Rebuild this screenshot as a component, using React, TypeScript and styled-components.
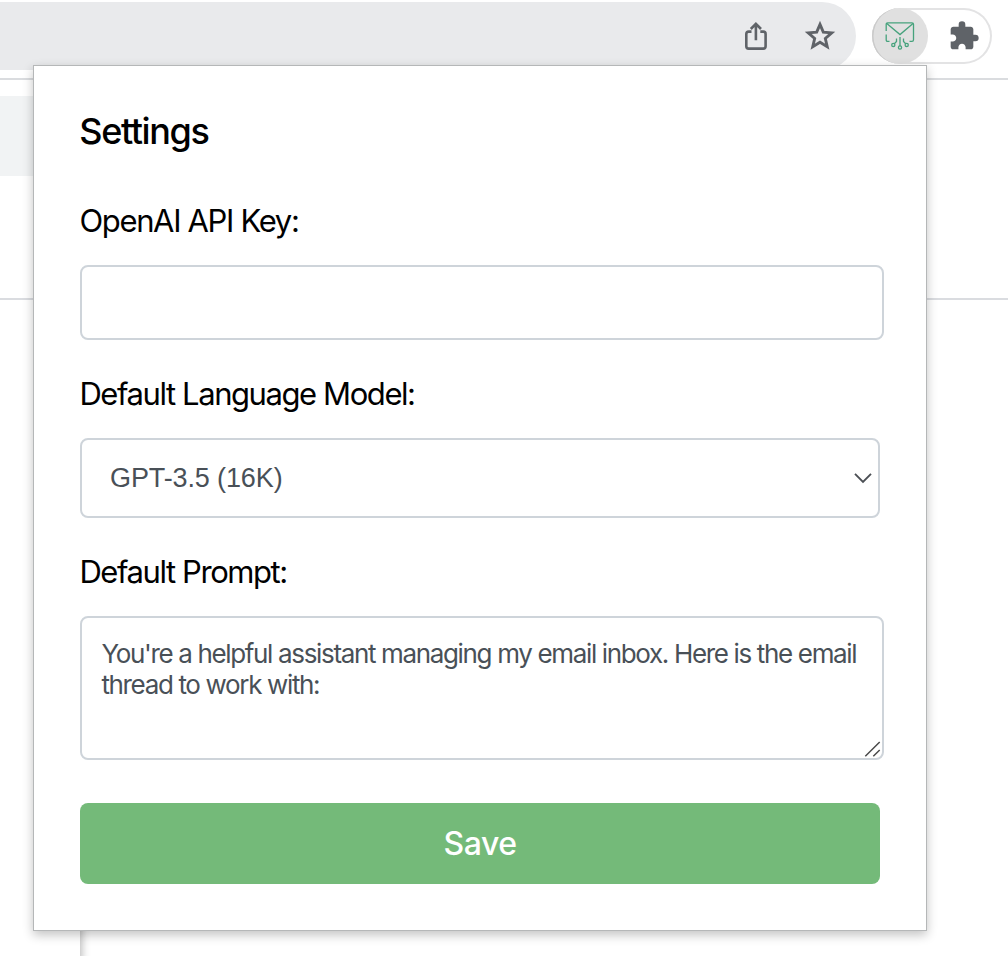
import React from 'react';
import styled, { createGlobalStyle } from 'styled-components';

const GlobalStyle = createGlobalStyle`
  *, *::before, *::after { box-sizing: border-box; }
  body { margin: 0; background: #fff; font-family: Inter, "Liberation Sans", sans-serif; }
`;

const Browser = styled.div`
  position: relative;
  width: 1008px;
  height: 956px;
  overflow: hidden;
  background: #fff;
  display: flex;
  flex-direction: column;
`;

const Toolbar = styled.header`
  display: flex;
  align-items: flex-start;
  gap: 16px;
  height: 80px;
  padding-top: 2px;
  border-bottom: 2px solid #dadcdf;
`;

const Omnibox = styled.div`
  display: flex;
  align-items: center;
  justify-content: flex-end;
  gap: 36px;
  width: 856px;
  height: 68px;
  padding-right: 20px;
  border-radius: 0 34px 34px 0;
  background: #e9eaec;
`;

const ExtensionPill = styled.div`
  display: flex;
  align-items: center;
  width: 120px;
  height: 56px;
  margin-top: 6px;
  border-radius: 28px;
  box-shadow: inset 0 0 0 2px #e3e3e4;
`;

const ActiveExtension = styled.div`
  display: flex;
  align-items: center;
  justify-content: center;
  width: 56px;
  height: 56px;
  margin-right: 20px;
  border-radius: 50%;
  background: #e0e0e0;
  box-shadow: inset 2px 0 0 -0.5px #cacaca;
`;

const PageStrip = styled.div`
  height: 220px;
  padding-top: 16px;
  border-bottom: 2px solid #dadce0;
`;

const SearchBlock = styled.div`
  width: 400px;
  height: 80px;
  background: #f1f3f4;
`;

const SideRail = styled.div`
  flex: 1;
  width: 80px;
  box-shadow: 1px 8px 9px rgba(0, 0, 0, 0.32);
  clip-path: inset(0 -20px 0 0);
`;

const Popup = styled.main`
  position: absolute;
  left: 33px;
  top: 65px;
  width: 894px;
  height: 866px;
  padding: 43px 42px 0 46px;
  border: 1px solid #b5b7b8;
  background: #fff;
  box-shadow: 0 4px 10px rgba(0, 0, 0, 0.24);
`;

const Title = styled.h1`
  margin: 0 0 48px -0.7px;
  font-size: 36px;
  line-height: 44px;
  font-weight: 500;
  letter-spacing: -1.4px;
  color: #000;
`;

const Field = styled.div`
  display: flex;
  flex-direction: column;
  margin-bottom: 34px;
`;

const Label = styled.label<{ $tracking: number }>`
  margin: 0 0 24px -0.6px;
  font-size: 31px;
  line-height: 40px;
  letter-spacing: ${(p) => p.$tracking}px;
  color: #000;
  white-space: nowrap;
`;

const KeyInput = styled.input`
  width: 804px;
  height: 75px;
  padding: 0 20px;
  border: 2px solid #ced4da;
  border-radius: 8px;
  font: 26px/31px Inter, sans-serif;
  color: #495057;
  background: #fff;
  outline: none;
`;

const SelectWrap = styled.div`
  position: relative;
  width: 800px;
  height: 80px;
`;

const Select = styled.select`
  appearance: none;
  width: 100%;
  height: 100%;
  padding: 0 28px;
  border: 2px solid #ced4da;
  border-radius: 8px;
  font: 27px/32px "Liberation Sans", sans-serif;
  letter-spacing: -0.12px;
  color: #495057;
  background: #fff;
  outline: none;
`;

const Chevron = styled.svg`
  position: absolute;
  right: 7px;
  top: 33px;
  pointer-events: none;
`;

const PromptWrap = styled.div`
  position: relative;
  width: 804px;
  height: 144px;
`;

const Prompt = styled.textarea`
  display: block;
  width: 100%;
  height: 100%;
  padding: 20px 16px 20px 19.4px;
  border: 2px solid #ced4da;
  border-radius: 8px;
  font: 26px/31px Inter, sans-serif;
  letter-spacing: -1.345px;
  color: #495057;
  background: #fff;
  resize: none;
  overflow: hidden;
  outline: none;
`;

const Grip = styled.svg`
  position: absolute;
  right: 2px;
  bottom: 2px;
  pointer-events: none;
`;

const SaveButton = styled.button`
  display: block;
  width: 800px;
  height: 81px;
  margin-top: 43px;
  padding: 0;
  border: 0;
  border-radius: 8px;
  background: #74ba79;
  color: #fff;
  font: 500 32px/40px Inter, sans-serif;
  letter-spacing: -0.5px;
`;

const PromptField = styled(Field)`
  margin-bottom: 0;
`;

const ShareIcon = () => (
  <svg width="24" height="30" viewBox="0 0 24 30" fill="none" stroke="#5f6368" strokeWidth="2.6" strokeLinejoin="round">
    <path d="M7.5 10.6H4.6Q2.3 10.6 2.3 12.9V25.3Q2.3 27.6 4.6 27.6H19.3Q21.6 27.6 21.6 25.3V12.9Q21.6 10.6 19.3 10.6H16.3" />
    <path d="M11.9 19.2V3M6.8 8L11.9 2.9L17 8" strokeLinejoin="miter" />
  </svg>
);

const StarIcon = () => (
  <svg width="32" height="32" viewBox="1 1.1 30 30" fill="none" stroke="#5f6368" strokeWidth="2.7">
    <path d="M16 5.2L19.1 12.5L27 13.2L21 18.4L22.8 26.1L16 22L9.2 26.1L11 18.4L5 13.2L12.9 12.5Z" />
  </svg>
);

const MailCircuitIcon = () => (
  <svg width="30" height="30" viewBox="0 0 30 30" fill="none" stroke="#46a27c" strokeWidth="1.3">
    <path d="M4.5 20.4H2.7Q1.2 20.4 1.2 18.8V13.5M1.2 10V3.3Q1.2 1.8 2.7 1.8H27Q28.5 1.8 28.5 3.3V18.8Q28.5 20.4 27 20.4H24.5" />
    <path d="M1.8 2.6L15 13.6L28 2.6" />
    <path d="M15 16V24.9M11.5 17.5V20.4L9.3 22.7M18.5 17.5V20.4L20.7 22.7" />
    <circle cx="8.3" cy="23.9" r="1.6" />
    <circle cx="15" cy="26.5" r="1.6" />
    <circle cx="21.7" cy="23.9" r="1.6" />
  </svg>
);

const PuzzleIcon = () => (
  <svg width="32" height="32" viewBox="0 0 24 24" fill="#5f6368">
    <path d="M20.5 11H19V7c0-1.1-.9-2-2-2h-4V3.5a2.5 2.5 0 0 0-5 0V5H4c-1.1 0-1.99.9-1.99 2v3.8H3.5c1.49 0 2.7 1.21 2.7 2.7s-1.21 2.7-2.7 2.7H2V20c0 1.1.9 2 2 2h3.8v-1.5c0-1.49 1.21-2.7 2.7-2.7s2.7 1.21 2.7 2.7V22H17c1.1 0 2-.9 2-2v-4h1.5a2.5 2.5 0 0 0 0-5z" />
  </svg>
);

export default function App() {
  return (
    <>
      <GlobalStyle />
      <Browser>
        <Toolbar>
          <Omnibox>
            <ShareIcon />
            <StarIcon />
          </Omnibox>
          <ExtensionPill>
            <ActiveExtension>
              <MailCircuitIcon />
            </ActiveExtension>
            <PuzzleIcon />
          </ExtensionPill>
        </Toolbar>
        <PageStrip>
          <SearchBlock />
        </PageStrip>
        <SideRail />
        <Popup>
          <Title>Settings</Title>
          <Field>
            <Label htmlFor="key" $tracking={-1.34}>OpenAI API Key:</Label>
            <KeyInput id="key" />
          </Field>
          <Field>
            <Label htmlFor="model" $tracking={-1.42}>Default Language Model:</Label>
            <SelectWrap>
              <Select id="model">
                <option>GPT-3.5 (16K)</option>
              </Select>
              <Chevron width="20" height="14" viewBox="0 0 20 14" fill="none" stroke="#4b4f54" strokeWidth="1.9">
                <path d="M2 2.9L10 10.9L18 2.9" />
              </Chevron>
            </SelectWrap>
          </Field>
          <PromptField>
            <Label htmlFor="prompt" $tracking={-1.42}>Default Prompt:</Label>
            <PromptWrap>
              <Prompt
                id="prompt"
                spellCheck={false}
                defaultValue="You're a helpful assistant managing my email inbox. Here is the email thread to work with:"
              />
              <Grip width="18" height="18" viewBox="0 0 18 18" stroke="#4a4a4a" strokeWidth="1.5">
                <path d="M1.3 16.3L15.7 2M9.3 16.3L15.7 10" />
              </Grip>
            </PromptWrap>
          </PromptField>
          <SaveButton type="button">Save</SaveButton>
        </Popup>
      </Browser>
    </>
  );
}
